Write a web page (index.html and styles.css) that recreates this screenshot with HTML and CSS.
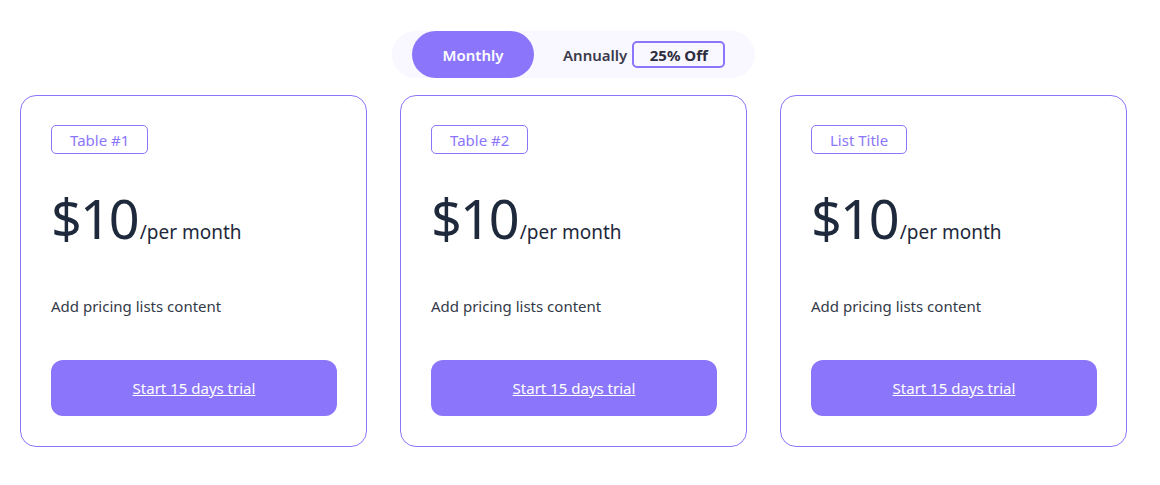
FILE: index.html
```html
<!DOCTYPE html>
<html>
<head>
<meta charset="utf-8">
<link rel="stylesheet" href="styles.css">
</head>
<body>
<div class="page">
  <div class="toggle-row">
    <div class="toggle">
      <span class="opt active">Monthly</span>
      <span class="opt">Annually <span class="off">25% Off</span></span>
    </div>
  </div>
  <div class="cards">
    <div class="card">
      <span class="tag">Table #1</span>
      <div class="price"><span class="amount">$10</span><span class="per">/per month</span></div>
      <p class="desc">Add pricing lists content</p>
      <a class="btn" href="#">Start 15 days trial</a>
    </div>
    <div class="card">
      <span class="tag">Table #2</span>
      <div class="price"><span class="amount">$10</span><span class="per">/per month</span></div>
      <p class="desc">Add pricing lists content</p>
      <a class="btn" href="#">Start 15 days trial</a>
    </div>
    <div class="card">
      <span class="tag">List Title</span>
      <div class="price"><span class="amount">$10</span><span class="per">/per month</span></div>
      <p class="desc">Add pricing lists content</p>
      <a class="btn" href="#">Start 15 days trial</a>
    </div>
  </div>
</div>
</body>
</html>
```
FILE: styles.css
```css
* { box-sizing: border-box; }
body {
  margin: 0;
  background: #ffffff;
  font-family: "Noto Sans", "Open Sans", sans-serif;
  color: #1f2937;
}
.page {
  width: 1127px;
  padding: 31px 0 0 20px;
}
.toggle-row {
  display: flex;
  justify-content: center;
}
.toggle {
  display: flex;
  align-items: center;
  width: 363px;
  height: 47px;
  padding-left: 20px;
  background: #f9f7ff;
  border-radius: 24px;
}
.opt {
  display: flex;
  align-items: center;
  font-size: 15px;
  font-weight: 600;
  color: #3a3a4c;
}
.opt.active {
  justify-content: center;
  width: 122px;
  height: 47px;
  border-radius: 24px;
  background: #8b76fb;
  color: #ffffff;
  margin-right: 29px;
}
.off {
  display: inline-flex;
  align-items: center;
  justify-content: center;
  width: 93px;
  height: 27px;
  margin-left: 5px;
  border: 2px solid #8b76fb;
  border-radius: 5px;
  color: #2d2d3d;
  font-weight: 700;
}
.cards {
  display: grid;
  grid-template-columns: repeat(3, 347px);
  gap: 33px;
  margin-top: 17px;
}
.card {
  height: 352px;
  border: 1px solid #8b76fb;
  border-radius: 16px;
  padding: 29px 29px 30px 30px;
  display: flex;
  flex-direction: column;
  align-items: flex-start;
}
.tag {
  display: inline-flex;
  align-items: center;
  height: 29px;
  padding: 0 18px;
  border: 1px solid #8b76fb;
  border-radius: 5px;
  color: #8b76fb;
  font-size: 15px;
}
.price {
  display: flex;
  align-items: baseline;
  margin-top: 32px;
  height: 64px;
}
.amount {
  font-size: 54px;
  line-height: 64px;
  color: #1e293b;
  letter-spacing: -2px;
  margin-right: 2px;
}
.per {
  font-size: 19px;
  color: #1e293b;
}
.desc {
  margin: 46px 0 0;
  font-size: 15px;
  color: #333a48;
}
.btn {
  margin-top: auto;
  align-self: stretch;
  height: 56px;
  display: flex;
  align-items: center;
  justify-content: center;
  background: #8b76fb;
  border-radius: 12px;
  color: #ffffff;
  font-size: 15px;
  text-decoration: underline;
}
```
